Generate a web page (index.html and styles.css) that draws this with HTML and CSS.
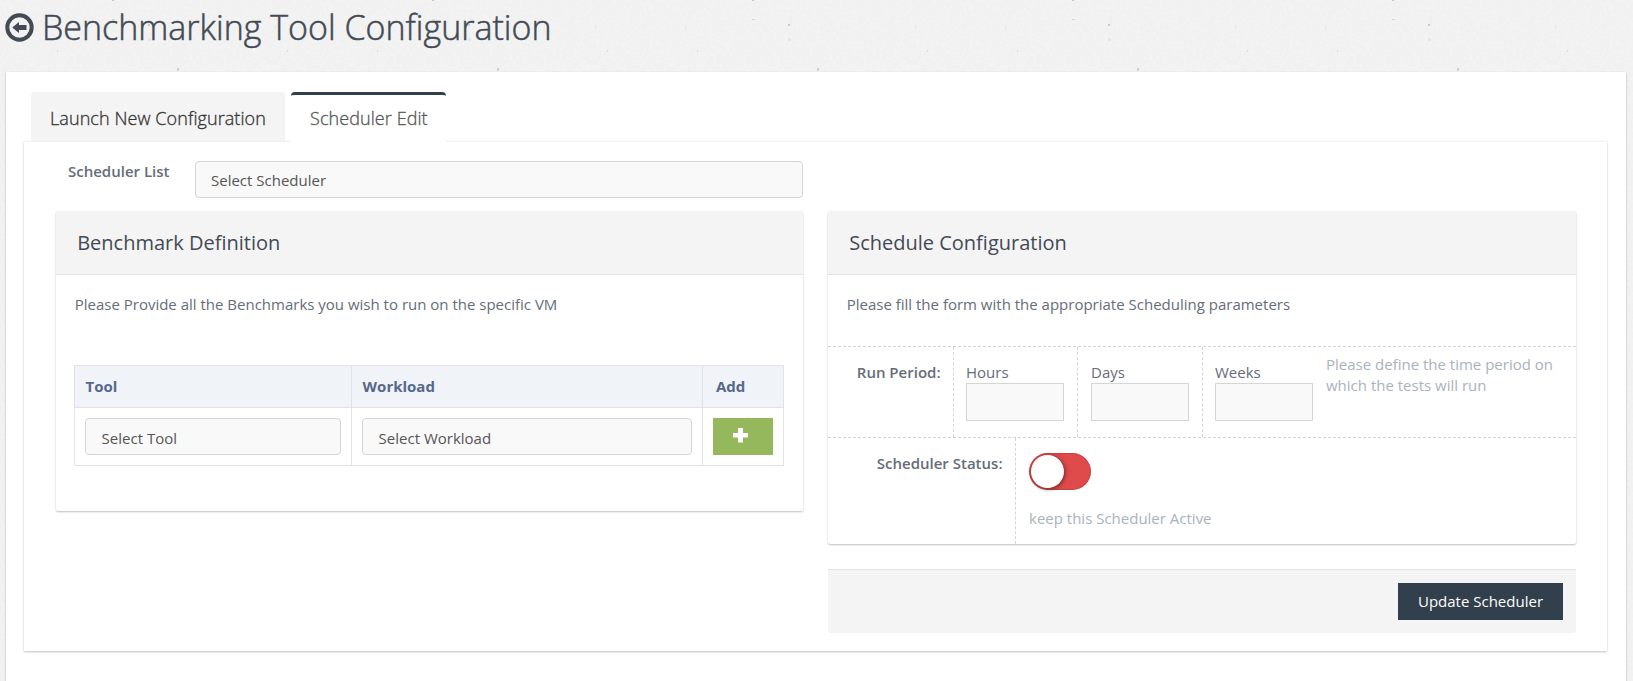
FILE: index.html
```html
<!DOCTYPE html>
<html lang="en">
<head>
<meta charset="utf-8">
<title>Benchmarking Tool Configuration</title>
<link rel="stylesheet" href="styles.css">
</head>
<body>
<header class="page-header">
  <svg class="back-icon" viewBox="0 0 29 29" aria-hidden="true">
    <circle cx="14.5" cy="14.5" r="12.2" fill="none" stroke="currentColor" stroke-width="4"/>
    <path fill="currentColor" d="M7.200 14.500 14 9V12H21.500V17H14v3z"/>
  </svg>
  <h1 class="page-title">Benchmarking Tool Configuration</h1>
</header>
<main class="panel">
  <nav class="tabs">
    <a class="tab">Launch New Configuration</a>
    <a class="tab tab-active">Scheduler Edit</a>
  </nav>
  <section class="tab-content">
    <div class="scheduler-row">
      <label class="scheduler-label">Scheduler List</label>
      <div class="select">Select Scheduler</div>
    </div>
    <div class="columns">
      <div class="box box-benchmark">
        <h2 class="box-title">Benchmark Definition</h2>
        <p class="intro">Please Provide all the Benchmarks you wish to run on the specific VM</p>
        <div class="table">
          <div class="th">Tool</div>
          <div class="th">Workload</div>
          <div class="th th-add">Add</div>
          <div class="td"><div class="select select-cell">Select Tool</div></div>
          <div class="td"><div class="select select-cell">Select Workload</div></div>
          <div class="td">
            <button class="add-button" aria-label="Add"><svg class="plus" viewBox="0 0 15 15"><path fill="#fff" d="M5 0h5v5h5v4.500h-5V14.500H5V9.500H0V5h5z"/></svg></button>
          </div>
        </div>
      </div>
      <div class="column">
        <div class="box box-schedule">
          <h2 class="box-title">Schedule Configuration</h2>
          <p class="intro">Please fill the form with the appropriate Scheduling parameters</p>
          <div class="form-row period-row">
            <label class="form-label">Run Period:</label>
            <div class="cell">Hours<input class="input"></div>
            <div class="cell cell-days">Days<input class="input"></div>
            <div class="cell">Weeks<input class="input"></div>
            <p class="help">Please define the time period on which the tests will run</p>
          </div>
          <div class="form-row status-row">
            <label class="form-label">Scheduler Status:</label>
            <div class="cell status-cell">
              <div class="switch"><span class="knob"></span></div>
              <p class="status-help">keep this Scheduler Active</p>
            </div>
          </div>
        </div>
        <div class="actions"><button class="update-button">Update Scheduler</button></div>
      </div>
    </div>
  </section>
</main>
</body>
</html>
```
FILE: styles.css
```css
* { box-sizing: border-box; }

body {
  margin: 0;
  height: 681px;
  overflow: hidden;
  display: flex;
  flex-direction: column;
  color: #656d78;
  font: 15px/21px "Open Sans", sans-serif;
  background: #f3f3f3 url("data:image/svg+xml,%3Csvg xmlns='http://www.w3.org/2000/svg' width='320' height='200'%3E%3Cfilter id='n' x='0' y='0' width='100%25' height='100%25'%3E%3CfeTurbulence type='fractalNoise' baseFrequency='.3' numOctaves='3' stitchTiles='stitch'/%3E%3CfeColorMatrix values='0 0 0 0 .5 0 0 0 0 .5 0 0 0 0 .48 .12 0 0 0 -.038'/%3E%3C/filter%3E%3Crect width='320' height='200' filter='url(%23n)'/%3E%3Cg fill='%23999' opacity='.45'%3E%3Crect x='62' y='0' width='2' height='1'/%3E%3Crect x='62' y='19' width='3' height='1' opacity='.7'/%3E%3Crect x='98' y='24' width='2' height='2'/%3E%3Crect x='98' y='38' width='3' height='3' opacity='.3'/%3E%3Crect x='127' y='68' width='2' height='3' opacity='.8'/%3E%3Crect x='225' y='26' width='1' height='3' opacity='.4'/%3E%3Crect x='315' y='26' width='1' height='3' opacity='.4'/%3E%3Crect x='7' y='50' width='1' height='2' opacity='.6'/%3E%3Crect x='237' y='50' width='1' height='2' opacity='.6'/%3E%3C/g%3E%3C/svg%3E") 50px 0;
}

h1, h2, p { margin: 0; font-weight: 400; }

.page-header {
  height: 72px;
  flex: none;
  display: flex;
  align-items: flex-start;
  gap: 8px;
  padding: 0 5px;
  color: #434a54;
}
.back-icon { width: 29px; height: 29px; margin-top: 13px; }
.page-title {
  font-size: 34px;
  font-weight: 300;
  line-height: 55px;
  -webkit-text-stroke: .5px currentColor;
}

.panel {
  flex: 1;
  margin: 0 7px 0 6px;
  padding: 20px 19px 0 18px;
  background: #fff;
  box-shadow: 0 1px 2px rgba(0, 0, 0, .3);
}

.tabs {
  position: relative;
  display: flex;
  gap: 6px;
  height: 50px;
  margin-bottom: -1px;
  padding-left: 7px;
}
.tab {
  width: 254px;
  height: 49px;
  padding: 3px 0 0 19px;
  border-radius: 4px 4px 0 0;
  background: #f4f4f4;
  color: #333;
  font-size: 18px;
  font-weight: 300;
  letter-spacing: .08px;
  line-height: 47px;
  -webkit-text-stroke: .3px currentColor;
}
.tab-active {
  width: 155px;
  height: 50px;
  padding-top: 0;
  border-top: 3px solid #323f4d;
  background: #fff;
  color: #555;
}

.tab-content {
  height: 510px;
  padding: 19px 31px 0 32px;
  border-top: 1px solid #f2f2f2;
  box-shadow: 0 1px 2px rgba(0, 0, 0, .25);
}
.scheduler-row {
  display: flex;
  width: 747px;
  height: 50px;
  padding-left: 12px;
}
.scheduler-label { width: 127px; font-weight: 600; }

.select {
  flex: 1;
  height: 37px;
  padding: 0 15px;
  border: 1px solid #d5d5d5;
  border-radius: 4px;
  background: #f9f9f9;
  color: #555;
  line-height: 37px;
}
.select-cell { padding-left: 15.6px; line-height: 38px; }

.columns {
  display: grid;
  grid-template-columns: 747px 748px;
  gap: 25px;
  align-items: start;
}
.box {
  border-radius: 2px;
  box-shadow: 0 1px 2px rgba(0, 0, 0, .25);
}
.box-benchmark { height: 300px; }
.box-schedule { height: 333px; }
.box-title {
  height: 64px;
  padding-left: 21.2px;
  border-bottom: 1px solid #e3e3e3;
  border-radius: 2px 2px 0 0;
  background: #f4f4f4;
  color: #434a54;
  font-size: 20px;
  line-height: 63px;
}
.intro { height: 71px; padding: 19px 18.7px 0; }

.table {
  display: grid;
  grid-template-columns: 277px 351px 81px;
  grid-template-rows: 42px 58px;
  width: 710px;
  margin: 19px 0 0 18px;
  border: solid #e3e3e3;
  border-width: 1px 0 0 1px;
}
.th, .td { border: solid #e3e3e3; border-width: 0 1px 1px 0; }
.th {
  padding-left: 10.6px;
  background: #f0f4f9;
  color: #56688a;
  font-weight: 700;
  line-height: 41px;
}
.th-add { padding-left: 13px; }
.td { padding: 10px; }
.add-button {
  display: flex;
  justify-content: center;
  width: 60px;
  height: 37px;
  padding: 10px 0 0;
  border: 0;
  background: #96b85d;
}
.plus { width: 15px; height: 15px; margin-right: 5px; }

.form-row { display: grid; border-top: 1px dashed #d5d5d5; }
.period-row { height: 91px; grid-template-columns: 125px 124px 125px 124px 250px; }
.status-row { height: 107px; grid-template-columns: 187px 561px; }
.form-label { padding: 15px 12.5px 0 0; font-weight: 600; text-align: right; }
.cell { padding: 15px 0 0 12px; border-left: 1px dashed #d5d5d5; }
.cell-days { padding-left: 13px; }
.input {
  display: block;
  width: 98px;
  height: 38px;
  border: 1px solid #d5d5d5;
  background: #f9f9f9;
}
.help { padding: 7px 0 0; color: #aab2bd; }
.status-cell { padding: 15px 0 0 13px; }
.switch {
  width: 62px;
  height: 37px;
  padding: 2px;
  border-radius: 19px;
  background: #df4b4b;
  box-shadow: inset 0 0 1px 1px rgba(0, 0, 0, .12);
}
.knob {
  display: block;
  width: 33px;
  height: 33px;
  border-radius: 50%;
  background: #fff;
  box-shadow: 1px 1px 4px rgba(0, 0, 0, .5);
}
.status-help { padding-top: 18px; color: #aab2bd; }

.actions {
  display: flex;
  justify-content: flex-end;
  height: 64px;
  margin-top: 25px;
  padding: 13px 13px 0;
  border-top: 1px solid #e3e3e3;
  border-radius: 0 0 3px 3px;
  background: #f4f4f4;
}
.update-button {
  width: 165px;
  height: 37px;
  padding: 0;
  border: 0;
  background: #323f4d;
  color: #fff;
  font: inherit;
}
```
